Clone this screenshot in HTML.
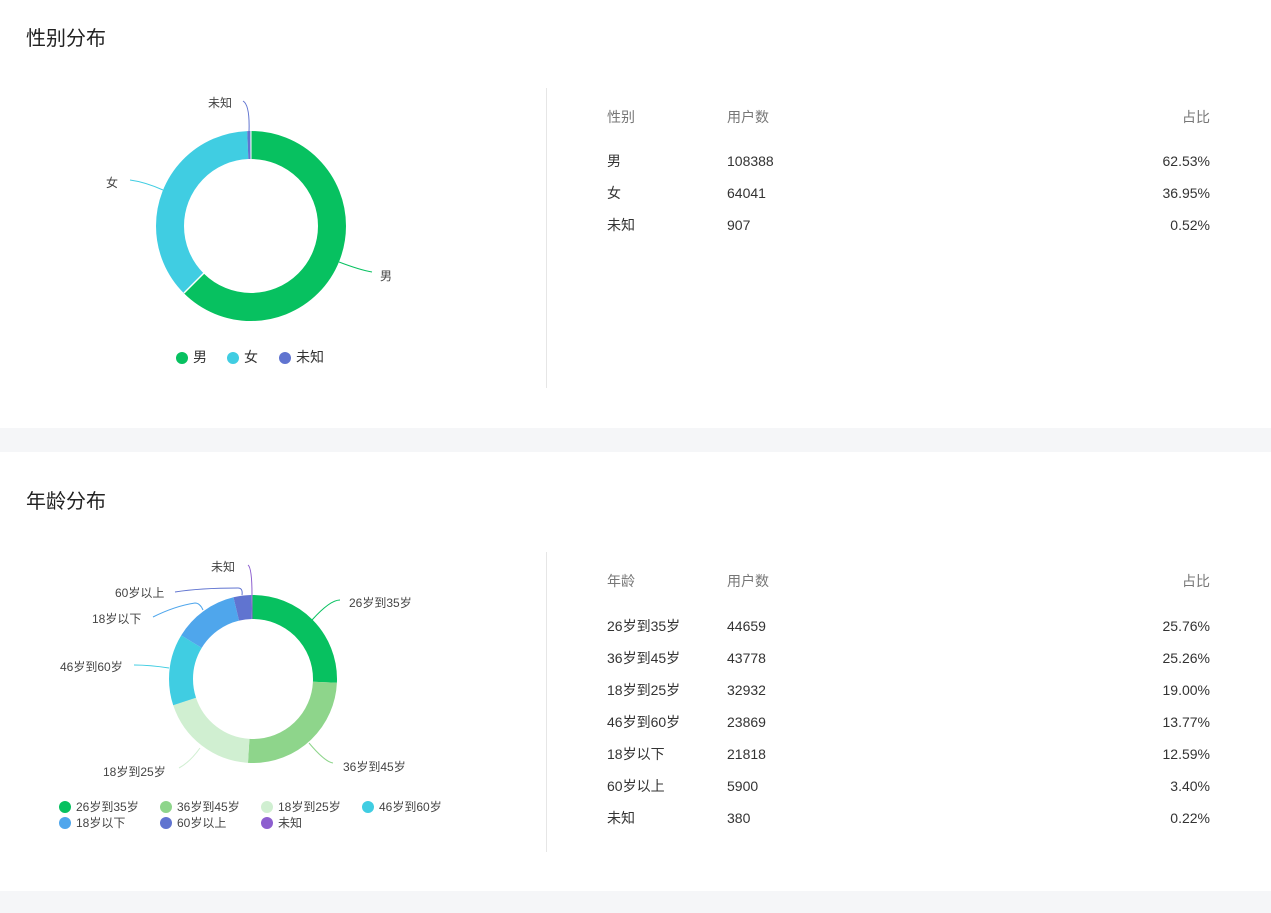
<!DOCTYPE html>
<html><head><meta charset="utf-8"><style>
*{margin:0;padding:0;box-sizing:border-box}
body{width:1271px;height:913px;background:#f5f6f8;position:relative;overflow:hidden;font-family:"Liberation Sans","Noto Sans CJK SC",sans-serif;color:#333}
.card{position:absolute;left:0;width:1271px;background:#fff}
.t{position:absolute;white-space:nowrap;line-height:20px}
.title{font-size:20px;color:#222;line-height:26px}
.h{font-size:14px;color:#777}
.r{font-size:14px;color:#333}
.right{text-align:right}
.vl{position:absolute;left:546px;width:1px;background:#e6e6e6}
.lab{font-size:12px;color:#444;line-height:16px}
.dot{display:inline-block;width:12px;height:12px;border-radius:50%;vertical-align:-2px;margin-right:5px}
</style></head><body>
<div class="card" style="top:0;height:428px"></div>
<div class="card" style="top:452px;height:439px"></div>
<div class="t title" style="left:26px;top:26px">性别分布</div>
<div class="t title" style="left:26px;top:489px">年龄分布</div>
<div class="vl" style="top:88px;height:300px"></div>
<div class="vl" style="top:552px;height:300px"></div>

<svg style="position:absolute;left:0;top:0" width="560" height="900">
<g fill="none" transform="rotate(-90 251 226)">
<circle cx="251" cy="226" r="81" stroke="#07c160" stroke-width="28" pathLength="100" stroke-dasharray="62.53 37.47"/>
<circle cx="251" cy="226" r="81" stroke="#40cde2" stroke-width="28" pathLength="100" stroke-dasharray="36.95 63.05" stroke-dashoffset="-62.53"/>
<circle cx="251" cy="226" r="81" stroke="#6074d0" stroke-width="28" pathLength="100" stroke-dasharray="0.52 99.48" stroke-dashoffset="-99.48"/>
</g>
<line x1="251" y1="131" x2="251" y2="159" stroke="#fff" stroke-width="1"/>
<line x1="184" y1="293" x2="204" y2="273" stroke="#fff" stroke-width="1.5"/>
<path d="M339 262 Q360 270 372 272" stroke="#07c160" fill="none"/>
<path d="M163 190 Q145 182 130 180" stroke="#40cde2" fill="none"/>
<path d="M249 132 Q250 105 243 101" stroke="#6074d0" fill="none"/>

<g fill="none" transform="rotate(-90 253 679)">
<circle cx="253" cy="679" r="72" stroke="#07c160" stroke-width="24" pathLength="100" stroke-dasharray="25.76 74.24"/>
<circle cx="253" cy="679" r="72" stroke="#8ed58b" stroke-width="24" pathLength="100" stroke-dasharray="25.26 74.74" stroke-dashoffset="-25.76"/>
<circle cx="253" cy="679" r="72" stroke="#d0efd1" stroke-width="24" pathLength="100" stroke-dasharray="19 81" stroke-dashoffset="-51.02"/>
<circle cx="253" cy="679" r="72" stroke="#40cde2" stroke-width="24" pathLength="100" stroke-dasharray="13.77 86.23" stroke-dashoffset="-70.02"/>
<circle cx="253" cy="679" r="72" stroke="#4fa6ec" stroke-width="24" pathLength="100" stroke-dasharray="12.59 87.41" stroke-dashoffset="-83.79"/>
<circle cx="253" cy="679" r="72" stroke="#6074d0" stroke-width="24" pathLength="100" stroke-dasharray="3.40 96.60" stroke-dashoffset="-96.38"/>
<circle cx="253" cy="679" r="72" stroke="#8d5fcf" stroke-width="24" pathLength="100" stroke-dasharray="0.22 99.78" stroke-dashoffset="-99.78"/>
</g>
<path d="M312 620 Q330 600 340 600" stroke="#07c160" fill="none"/>
<path d="M309 743 Q325 762 333 763" stroke="#8ed58b" fill="none"/>
<path d="M200 748 Q190 762 179 768" stroke="#d0efd1" fill="none"/>
<path d="M169 668 Q150 665 134 665" stroke="#40cde2" fill="none"/>
<path d="M203 610 Q200 603 195 603 Q175 606 153 617" stroke="#4fa6ec" fill="none"/>
<path d="M242 595 Q243 588 238 588 Q200 588 175 592" stroke="#6074d0" fill="none"/>
<path d="M252 595 Q252 568 248 565" stroke="#8d5fcf" fill="none"/>
</svg>

<div class="t lab" style="left:208px;top:95px">未知</div>
<div class="t lab" style="left:106px;top:175px">女</div>
<div class="t lab" style="left:380px;top:268px">男</div>
<div class="t" style="left:176px;top:347px;font-size:14px"><span class="dot" style="background:#07c160"></span>男</div>
<div class="t" style="left:227px;top:347px;font-size:14px"><span class="dot" style="background:#40cde2"></span>女</div>
<div class="t" style="left:279px;top:347px;font-size:14px"><span class="dot" style="background:#6074d0"></span>未知</div>

<div class="t lab" style="left:211px;top:559px">未知</div>
<div class="t lab" style="left:115px;top:585px">60岁以上</div>
<div class="t lab" style="left:92px;top:611px">18岁以下</div>
<div class="t lab" style="left:60px;top:659px">46岁到60岁</div>
<div class="t lab" style="left:103px;top:764px">18岁到25岁</div>
<div class="t lab" style="left:349px;top:595px">26岁到35岁</div>
<div class="t lab" style="left:343px;top:759px">36岁到45岁</div>
<div class="t lab" style="left:59px;top:799px"><span class="dot" style="background:#07c160"></span>26岁到35岁</div>
<div class="t lab" style="left:160px;top:799px"><span class="dot" style="background:#8ed58b"></span>36岁到45岁</div>
<div class="t lab" style="left:261px;top:799px"><span class="dot" style="background:#d0efd1"></span>18岁到25岁</div>
<div class="t lab" style="left:362px;top:799px"><span class="dot" style="background:#40cde2"></span>46岁到60岁</div>
<div class="t lab" style="left:59px;top:815px"><span class="dot" style="background:#4fa6ec"></span>18岁以下</div>
<div class="t lab" style="left:160px;top:815px"><span class="dot" style="background:#6074d0"></span>60岁以上</div>
<div class="t lab" style="left:261px;top:815px"><span class="dot" style="background:#8d5fcf"></span>未知</div>

<div class="t h" style="left:607px;top:107px">性别</div>
<div class="t h" style="left:727px;top:107px">用户数</div>
<div class="t h right" style="right:61px;top:107px">占比</div>
<div class="t r" style="left:607px;top:151px">男</div><div class="t r" style="left:727px;top:151px">108388</div><div class="t r" style="right:61px;top:151px">62.53%</div>
<div class="t r" style="left:607px;top:183px">女</div><div class="t r" style="left:727px;top:183px">64041</div><div class="t r" style="right:61px;top:183px">36.95%</div>
<div class="t r" style="left:607px;top:215px">未知</div><div class="t r" style="left:727px;top:215px">907</div><div class="t r" style="right:61px;top:215px">0.52%</div>

<div class="t h" style="left:607px;top:571px">年龄</div>
<div class="t h" style="left:727px;top:571px">用户数</div>
<div class="t h" style="right:61px;top:571px">占比</div>
<div class="t r" style="left:607px;top:616px">26岁到35岁</div><div class="t r" style="left:727px;top:616px">44659</div><div class="t r" style="right:61px;top:616px">25.76%</div>
<div class="t r" style="left:607px;top:648px">36岁到45岁</div><div class="t r" style="left:727px;top:648px">43778</div><div class="t r" style="right:61px;top:648px">25.26%</div>
<div class="t r" style="left:607px;top:680px">18岁到25岁</div><div class="t r" style="left:727px;top:680px">32932</div><div class="t r" style="right:61px;top:680px">19.00%</div>
<div class="t r" style="left:607px;top:712px">46岁到60岁</div><div class="t r" style="left:727px;top:712px">23869</div><div class="t r" style="right:61px;top:712px">13.77%</div>
<div class="t r" style="left:607px;top:744px">18岁以下</div><div class="t r" style="left:727px;top:744px">21818</div><div class="t r" style="right:61px;top:744px">12.59%</div>
<div class="t r" style="left:607px;top:776px">60岁以上</div><div class="t r" style="left:727px;top:776px">5900</div><div class="t r" style="right:61px;top:776px">3.40%</div>
<div class="t r" style="left:607px;top:808px">未知</div><div class="t r" style="left:727px;top:808px">380</div><div class="t r" style="right:61px;top:808px">0.22%</div>
</body></html>
